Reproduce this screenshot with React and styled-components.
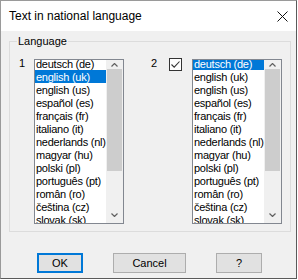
import styled, { createGlobalStyle } from "styled-components";

const GlobalStyle = createGlobalStyle`
  html, body {
    margin: 0;
    padding: 0;
    background: #ffffff;
  }
  body {
    font-family: "Liberation Sans", Arial, sans-serif;
    font-size: 11px;
    color: #000;
  }
`;

const languages = [
  "deutsch (de)",
  "english (uk)",
  "english (us)",
  "español (es)",
  "français (fr)",
  "italiano (it)",
  "nederlands (nl)",
  "magyar (hu)",
  "polski (pl)",
  "português (pt)",
  "român (ro)",
  "čeština (cz)",
  "slovak (sk)",
];

export default function App() {
  return (
    <>
      <GlobalStyle />
      <Window>
        <TitleBar>
          <Title>Text in national language</Title>
          <svg width="11" height="11" viewBox="0 0 11 11">
            <path d="M0.5 0.5 L10.5 10.5 M10.5 0.5 L0.5 10.5" stroke="#111" strokeWidth="1" />
          </svg>
        </TitleBar>
        <Body>
          <Group>
            <Legend>Language</Legend>
            <Row>
              <Num>1</Num>
              <LangList selected={1} />
              <Num $gap={27} $width={18}>2</Num>
              <Check>
                <svg width="11" height="11" viewBox="0 0 11 11">
                  <path d="M1.5 5.5 L4.2 8.2 L9.5 2.5" stroke="#333" strokeWidth="1.1" fill="none" />
                </svg>
              </Check>
              <LangList selected={0} gap={10} />
            </Row>
          </Group>
          <Buttons>
            <Button $default>OK</Button>
            <Button $width={73}>Cancel</Button>
            <Button>?</Button>
          </Buttons>
        </Body>
      </Window>
    </>
  );
}

function LangList({ selected, gap = 0 }) {
  return (
    <ListBox $gap={gap}>
      <Items>
        <ItemsInner>
          {languages.map((l, i) => (
            <Item key={l} $selected={i === selected}>
              {l}
            </Item>
          ))}
        </ItemsInner>
      </Items>
      <ScrollBar>
        <Arrow $height={9}>
          <svg width="7" height="4" viewBox="0 0 7 4">
            <path d="M0.5 3.5 L3.5 0.5 L6.5 3.5" stroke="#606060" strokeWidth="1.2" fill="none" />
          </svg>
        </Arrow>
        <Thumb />
        <Track />
        <Arrow $height={17}>
          <svg width="7" height="4" viewBox="0 0 7 4">
            <path d="M0.5 0.5 L3.5 3.5 L6.5 0.5" stroke="#606060" strokeWidth="1.2" fill="none" />
          </svg>
        </Arrow>
      </ScrollBar>
    </ListBox>
  );
}

const Window = styled.div`
  width: 297px;
  height: 279px;
  box-sizing: border-box;
  border: 1px solid #9a9a9a;
  border-right-color: #5a5a5a;
  border-bottom-color: #5a5a5a;
  display: flex;
  flex-direction: column;
`;

const TitleBar = styled.div`
  height: 30px;
  flex-shrink: 0;
  background: #ffffff;
  display: flex;
  align-items: center;
  justify-content: space-between;
  padding: 0 8px 0 8px;
`;

const Title = styled.span`
  font-size: 12px;
  line-height: 16px;
`;

const Body = styled.div`
  flex: 1;
  background: #f0f0f0;
  display: flex;
  flex-direction: column;
  padding: 10px 0 0 8px;
`;

const Group = styled.div`
  position: relative;
  width: 282px;
  height: 191px;
  box-sizing: border-box;
  border: 1px solid #dcdcdc;
  padding: 17px 0 0 9px;
`;

const Legend = styled.span`
  position: absolute;
  top: -7px;
  left: 7px;
  padding: 0 1px;
  line-height: 13px;
  background: #f0f0f0;
`;

const Row = styled.div`
  display: flex;
  align-items: flex-start;
`;

const Num = styled.span`
  width: ${(p) => p.$width || 15}px;
  margin-left: ${(p) => p.$gap || 0}px;
  margin-top: -2px;
  line-height: 13px;
`;

const Check = styled.div`
  width: 13px;
  height: 13px;
  margin-top: -1px;
  box-sizing: border-box;
  border: 1px solid #333333;
  background: #ffffff;
  display: flex;
  align-items: center;
  justify-content: center;
`;

const ListBox = styled.div`
  width: 90px;
  height: 165px;
  margin-left: ${(p) => p.$gap}px;
  box-sizing: border-box;
  border: 1px solid #828790;
  background: #ffffff;
  display: flex;
  overflow: hidden;
`;

const Items = styled.div`
  flex: 1;
  overflow: hidden;
`;

const ItemsInner = styled.div`
  margin-top: -3px;
`;

const Item = styled.div`
  height: 13px;
  line-height: 14px;
  padding-left: 1px;
  white-space: nowrap;
  letter-spacing: -0.25px;
  background: ${(p) => (p.$selected ? "#0078d7" : "transparent")};
  color: ${(p) => (p.$selected ? "#ffffff" : "#000000")};
`;

const ScrollBar = styled.div`
  width: 17px;
  flex-shrink: 0;
  background: #f0f0f0;
  display: flex;
  flex-direction: column;
`;

const Arrow = styled.div`
  height: ${(p) => p.$height}px;
  flex-shrink: 0;
  display: flex;
  align-items: center;
  justify-content: center;
`;

const Thumb = styled.div`
  height: 102px;
  margin: 0 1px;
  background: #cdcdcd;
`;

const Track = styled.div`
  flex: 1;
`;

const Buttons = styled.div`
  display: flex;
  gap: 30px;
  margin-top: 21px;
  padding-left: 28px;
`;

const Button = styled.button`
  width: ${(p) => p.$width || 46}px;
  height: 20px;
  box-sizing: border-box;
  padding: 0;
  font-family: "Liberation Sans", Arial, sans-serif;
  font-size: 11px;
  color: #000;
  background: #e1e1e1;
  border: ${(p) => (p.$default ? "2px solid #0078d7" : "1px solid #adadad")};
  border-radius: 0;
`;
